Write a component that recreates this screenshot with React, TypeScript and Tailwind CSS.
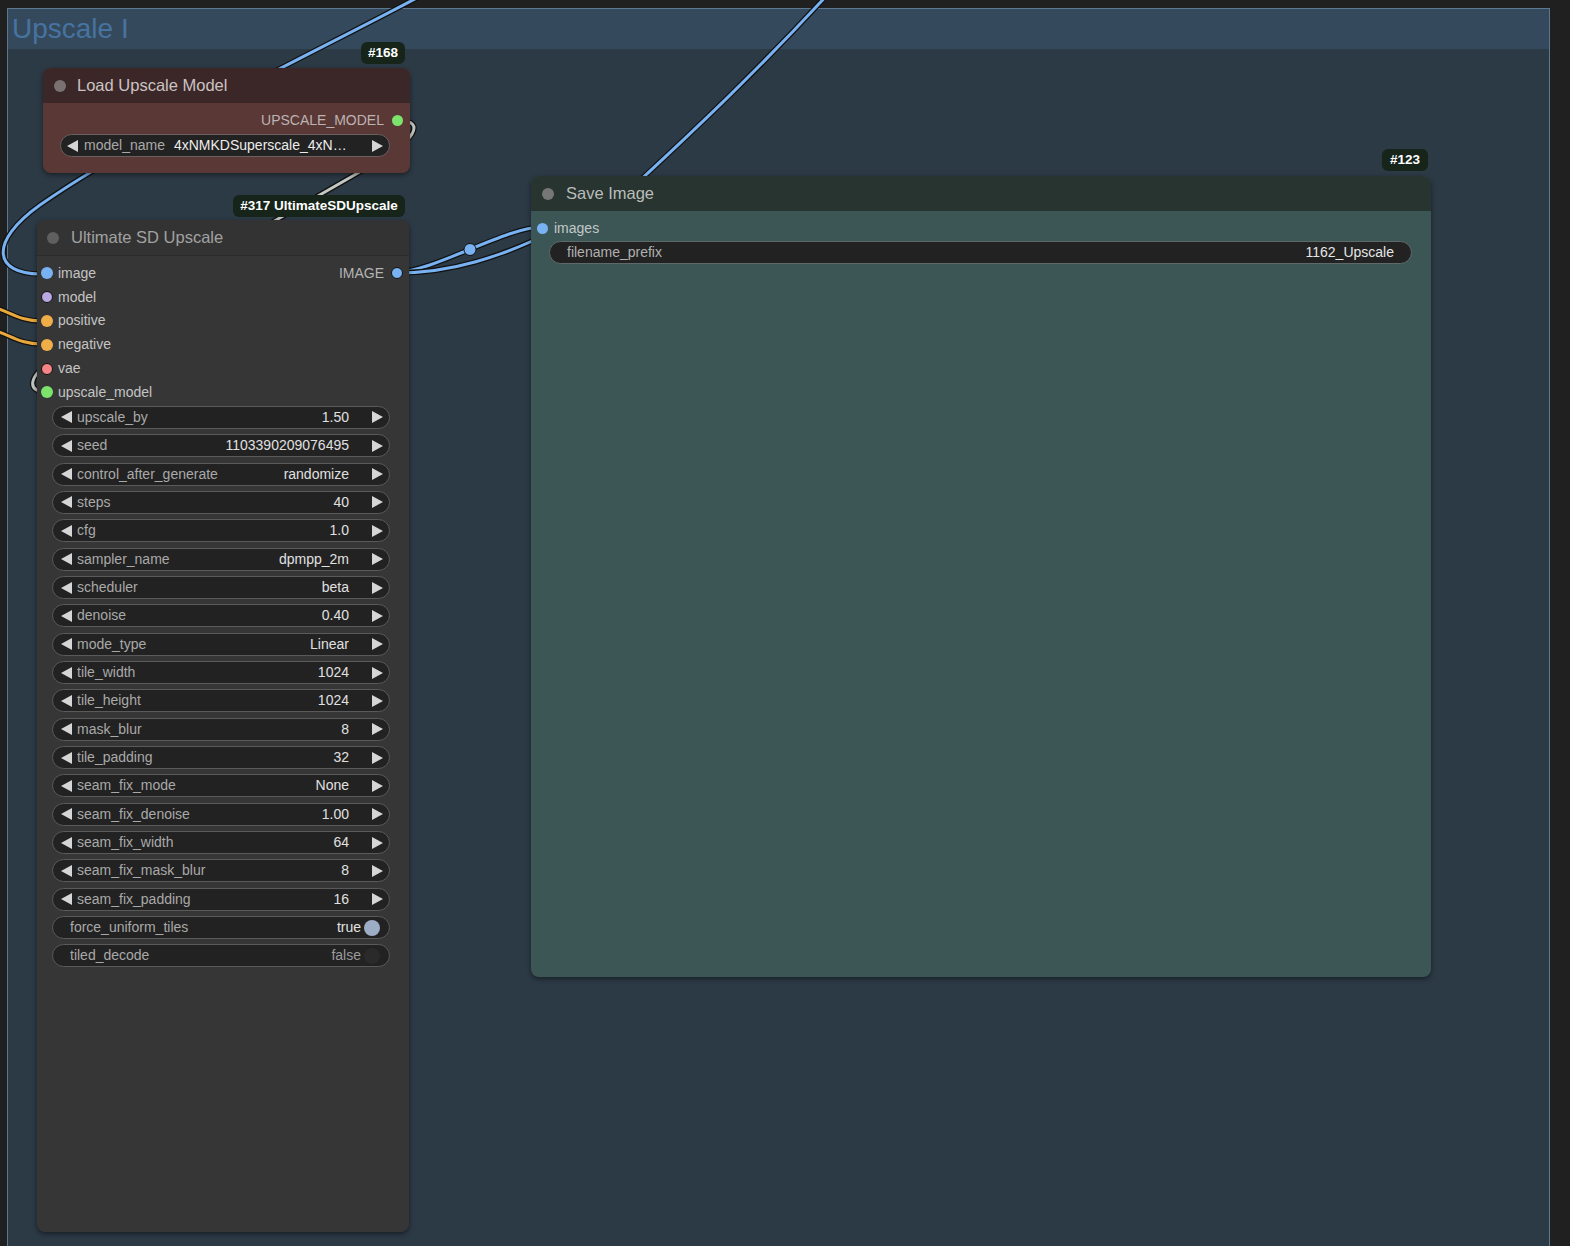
import React from "react";

type Widget = { label: string; value: string; toggle?: boolean; on?: boolean };

const WIDGETS: Widget[] = [
  { label: "upscale_by", value: "1.50" },
  { label: "seed", value: "1103390209076495" },
  { label: "control_after_generate", value: "randomize" },
  { label: "steps", value: "40" },
  { label: "cfg", value: "1.0" },
  { label: "sampler_name", value: "dpmpp_2m" },
  { label: "scheduler", value: "beta" },
  { label: "denoise", value: "0.40" },
  { label: "mode_type", value: "Linear" },
  { label: "tile_width", value: "1024" },
  { label: "tile_height", value: "1024" },
  { label: "mask_blur", value: "8" },
  { label: "tile_padding", value: "32" },
  { label: "seam_fix_mode", value: "None" },
  { label: "seam_fix_denoise", value: "1.00" },
  { label: "seam_fix_width", value: "64" },
  { label: "seam_fix_mask_blur", value: "8" },
  { label: "seam_fix_padding", value: "16" },
  { label: "force_uniform_tiles", value: "true", toggle: true, on: true },
  { label: "tiled_decode", value: "false", toggle: true, on: false },
];

const INPUTS = [
  { name: "image", color: "bg-[#78b2f2]", ring: false },
  { name: "model", color: "bg-[#b9a8e2]", ring: true },
  { name: "positive", color: "bg-[#f0ae48]", ring: false },
  { name: "negative", color: "bg-[#f0ae48]", ring: false },
  { name: "vae", color: "bg-[#f58585]", ring: true },
  { name: "upscale_model", color: "bg-[#7ce36c]", ring: false },
];

function Arrow({ dir }: { dir: "l" | "r" }) {
  return (
    <svg width="11" height="12" viewBox="0 0 11 12" className="shrink-0">
      <polygon points={dir === "l" ? "11,0 11,12 0,6" : "0,0 0,12 11,6"} fill="#d6d6d6" />
    </svg>
  );
}

function Badge({ text, className }: { text: string; className: string }) {
  return (
    <div
      className={`absolute flex h-[22px] items-center justify-center rounded-[6px] bg-[#16241a] text-[13.5px] font-bold text-white ${className}`}
    >
      {text}
    </div>
  );
}

function TitleBar({
  title,
  className,
  dotClass,
  textClass,
}: {
  title: string;
  className: string;
  dotClass: string;
  textClass: string;
}) {
  return (
    <div className={`flex items-center rounded-t-[8px] ${className}`}>
      <span className={`h-[12px] w-[12px] rounded-full ${dotClass}`} />
      <span className={`text-[16.5px] ${textClass}`}>{title}</span>
    </div>
  );
}

function WidgetRow({ w }: { w: Widget }) {
  if (w.toggle) {
    return (
      <div className="flex h-[28.35px] items-center">
        <div className="flex h-[23px] w-full items-center rounded-full border border-[#5a5a5a] bg-[#222222] pl-[17px] pr-[9px] text-[14px]">
          <span className="text-[#a9a9a9]">{w.label}</span>
          <span className={`ml-auto ${w.on ? "text-[#e2e2e2]" : "text-[#9a9a9a]"}`}>{w.value}</span>
          <span
            className={`ml-[3px] h-[16px] w-[16px] rounded-full ${w.on ? "bg-[#9eadc6]" : "bg-[#2a2a2a]"}`}
          />
        </div>
      </div>
    );
  }
  return (
    <div className="flex h-[28.35px] items-center">
      <div className="flex h-[23px] w-full items-center rounded-full border border-[#5a5a5a] bg-[#222222] pl-[8px] pr-[6px] text-[14px]">
        <Arrow dir="l" />
        <span className="ml-[5px] text-[#a9a9a9]">{w.label}</span>
        <span className="ml-auto text-[#e0e0e0]">{w.value}</span>
        <span className="ml-[23px]">
          <Arrow dir="r" />
        </span>
      </div>
    </div>
  );
}

function Links() {
  const link = (d: string, color: string, key: string) => (
    <g key={key}>
      <path d={d} fill="none" stroke="#111" strokeWidth="5.5" strokeLinecap="round" />
      <path d={d} fill="none" stroke={color} strokeWidth="3" strokeLinecap="round" />
    </g>
  );
  return (
    <svg className="absolute left-0 top-0" width="1570" height="1246" viewBox="0 0 1570 1246">
      {link("M 428 -8 C 320 50, 140 135, 40 205 C -12 242, -6 274, 40 274", "#78b2f2", "a")}
      {link("M 830 -8 C 760 68, 700 125, 636 184", "#78b2f2", "b")}
      {link("M 397 272 C 433 272, 506 227, 542 227", "#78b2f2", "c")}
      {link("M 397 273 C 450 273, 500 258, 560 228", "#78b2f2", "d")}
      {link("M -20 304 C 8 308, 14 321, 42 321", "#e9a83c", "e")}
      {link("M -20 327 C 8 331, 14 344, 42 344", "#e9a83c", "f")}
      {link(
        "M 398 120 C 428 121, 414 142, 370 166 L 285 215 C 180 275, 40 352, 33 381 C 31 389, 38 392, 47 392",
        "#c4c8c4",
        "g"
      )}
      <circle cx="470" cy="249.5" r="6" fill="#78b2f2" stroke="#111" strokeWidth="1" />
    </svg>
  );
}

export default function App() {
  return (
    <div className="relative h-[1246px] w-[1570px] overflow-hidden bg-[#202020] font-['Liberation_Sans',Arial,sans-serif]">
      {/* group */}
      <div className="absolute left-[7px] top-[8px] h-[1260px] w-[1543px] border border-[#5c7790] bg-[#2c3a46]">
        <div className="flex h-[40px] items-center bg-[#35495d] pl-[4px] text-[28px] text-[#4673a0]">
          Upscale I
        </div>
      </div>

      <Links />

      {/* Load Upscale Model */}
      <div className="absolute left-[43px] top-[68px] flex h-[105px] w-[367px] flex-col rounded-[8px] bg-[#5a3836] shadow-[0_2px_5px_rgba(0,0,0,0.45)]">
        <TitleBar
          title="Load Upscale Model"
          className="h-[35px] gap-[11px] bg-[#3b2727] pl-[11px]"
          dotClass="bg-[#7a7272]"
          textClass="text-[#cbc3c3]"
        />
        <div className="mt-[7px] flex h-[20px] items-center justify-end pr-[7px] text-[14px] text-[#bcb3b3]">
          UPSCALE_MODEL
          <span className="ml-[8px] h-[11px] w-[11px] rounded-full bg-[#7ce36c]" />
        </div>
        <div className="mt-[4px] pl-[17px] pr-[20px]">
          <div className="flex h-[23px] items-center rounded-full border border-[#6a6060] bg-[#222222] pl-[6px] pr-[6px] text-[14px]">
            <Arrow dir="l" />
            <span className="ml-[6px] text-[#a9a9a9]">model_name</span>
            <span className="ml-[9px] text-[#ececec]">4xNMKDSuperscale_4xN…</span>
            <span className="ml-auto">
              <Arrow dir="r" />
            </span>
          </div>
        </div>
      </div>

      {/* Ultimate SD Upscale */}
      <div className="absolute left-[37px] top-[220px] flex h-[1012px] w-[372px] flex-col rounded-[8px] bg-[#363636] shadow-[0_2px_5px_rgba(0,0,0,0.5)]">
        <TitleBar
          title="Ultimate SD Upscale"
          className="h-[36px] gap-[12px] border-b border-[#2b2b2b] bg-[#333333] pl-[10px]"
          dotClass="bg-[#5f5f5f]"
          textClass="text-[#a2a2a2]"
        />
        <div className="relative pt-[5.5px]">
          {INPUTS.map((inp) => (
            <div key={inp.name} className="flex h-[23.8px] items-center pl-[4px] text-[14px] text-[#c4c4c4]">
              <span
                className={`h-[12px] w-[12px] rounded-full ${inp.color} ${inp.ring ? "border border-[#111]" : ""}`}
              />
              <span className="ml-[5px]">{inp.name}</span>
            </div>
          ))}
          <div className="absolute right-[6px] top-[5.5px] flex h-[23.8px] items-center text-[14px] text-[#b4b4b4]">
            IMAGE
            <span className="ml-[7px] h-[12px] w-[12px] rounded-full border border-[#111] bg-[#78b2f2]" />
          </div>
        </div>
        <div className="-mt-[1px] flex flex-col pl-[15px] pr-[19px]">
          {WIDGETS.map((w) => (
            <WidgetRow key={w.label} w={w} />
          ))}
        </div>
      </div>

      {/* Save Image */}
      <div className="absolute left-[531px] top-[176px] flex h-[801px] w-[900px] flex-col rounded-[8px] bg-[#3c5655] shadow-[0_2px_5px_rgba(0,0,0,0.45)]">
        <TitleBar
          title="Save Image"
          className="h-[35px] gap-[12px] bg-[#28342f] pl-[11px]"
          dotClass="bg-[#767676]"
          textClass="text-[#b9bdbb]"
        />
        <div className="mt-[5px] flex h-[24px] items-center pl-[6px] text-[14px] text-[#c2c8c8]">
          <span className="h-[11px] w-[11px] rounded-full bg-[#78b2f2]" />
          <span className="ml-[6px]">images</span>
        </div>
        <div className="mt-[1px] pl-[18px] pr-[19px]">
          <div className="flex h-[23px] items-center rounded-full border border-[#5e6a6a] bg-[#222222] px-[17px] text-[14px]">
            <span className="text-[#b0b0b0]">filename_prefix</span>
            <span className="ml-auto text-[#e6e6e6]">1162_Upscale</span>
          </div>
        </div>
      </div>

      <Badge text="#168" className="left-[361px] top-[42px] w-[44px]" />
      <Badge text="#317 UltimateSDUpscale" className="left-[233px] top-[195px] w-[172px]" />
      <Badge text="#123" className="left-[1382px] top-[149px] w-[46px]" />
    </div>
  );
}
